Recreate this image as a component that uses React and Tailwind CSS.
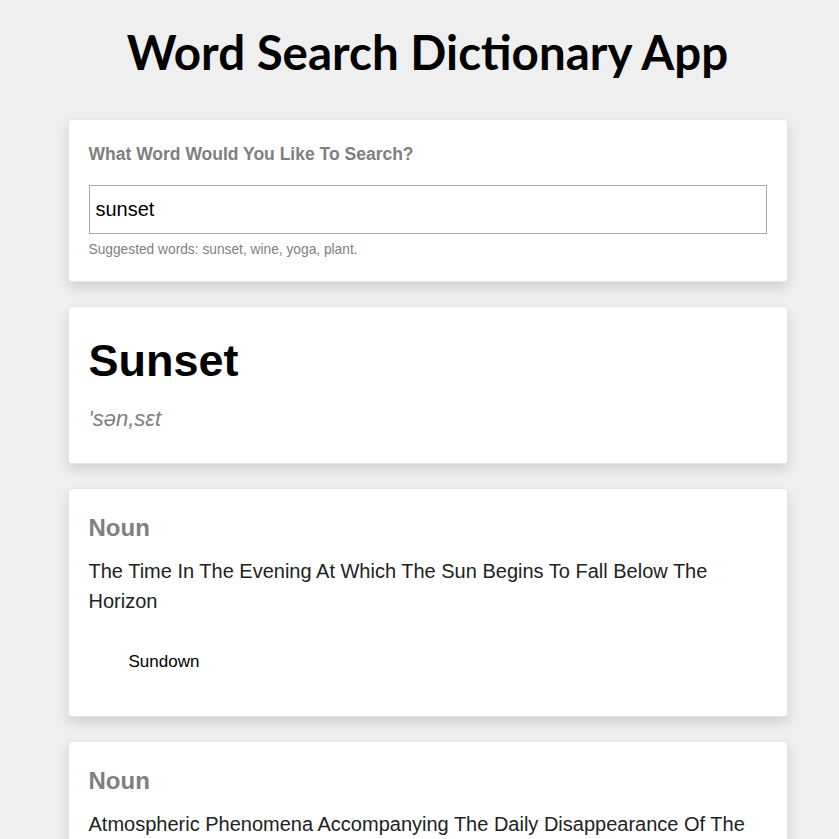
const meanings = [
  {
    partOfSpeech: "Noun",
    definition: "The Time In The Evening At Which The Sun Begins To Fall Below The Horizon",
    synonyms: ["Sundown"]
  },
  {
    partOfSpeech: "Noun",
    definition: "Atmospheric Phenomena Accompanying The Daily Disappearance Of The Sun",
    synonyms: []
  }
];

export default function App() {
  return (
    <div className="min-h-screen bg-[#efefef] pl-4 pb-10 font-['Liberation_Sans',Arial,sans-serif]">
      <div className="mx-auto w-[720px]">

        {/* Header */}
        <h1 className="pt-[24px] pb-[39px] text-center font-['Lato',sans-serif] text-[47.5px] font-bold leading-[56px] text-black">
          Word Search Dictionary App
        </h1>

        {/* Search */}
        <section className="mb-[24px] rounded bg-white px-5 pt-[25px] pb-[23px] shadow-[0_6px_12px_rgba(0,0,0,0.12)] border border-[#e6e6e6]">
          <label className="block text-[17.5px] font-bold leading-[18px] text-[#808080]">
            What Word Would You Like To Search?
          </label>
          <input
            className="mt-[22px] h-[49px] w-full border border-[#a8a8a8] px-[6px] text-[20px] text-black outline-none"
            defaultValue="sunset"
          />
          <p className="mt-[8px] text-[13.75px] leading-[16px] text-[#808080]">
            Suggested words: sunset, wine, yoga, plant.
          </p>
        </section>

        {/* Word */}
        <section className="mb-[24px] rounded bg-white px-5 pt-[29px] pb-[31px] shadow-[0_6px_12px_rgba(0,0,0,0.12)] border border-[#e6e6e6]">
          <h2 className="text-[45px] font-bold leading-[50px] text-black">Sunset</h2>
          <div className="mt-[20px] text-[22px] italic leading-[26px] text-[#808080]">'sən,sɛt</div>
        </section>

        {/* Meanings */}
        {meanings.map((meaning, i) => (
          <section
            key={i}
            className="mb-[24px] rounded bg-white px-5 pt-[25px] pb-[44px] shadow-[0_6px_12px_rgba(0,0,0,0.12)] border border-[#e6e6e6]"
          >
            <h3 className="text-[24px] font-bold leading-[28px] text-[#808080]">{meaning.partOfSpeech}</h3>
            <p className="mt-[14px] text-[20px] leading-[30px] text-[#222]">{meaning.definition}</p>
            {meaning.synonyms.length > 0 && (
              <ul className="mt-[36px] pl-10">
                {meaning.synonyms.map((s) => (
                  <li key={s} className="text-[17px] leading-[20px] text-black">{s}</li>
                ))}
              </ul>
            )}
          </section>
        ))}

      </div>
    </div>
  );
}
